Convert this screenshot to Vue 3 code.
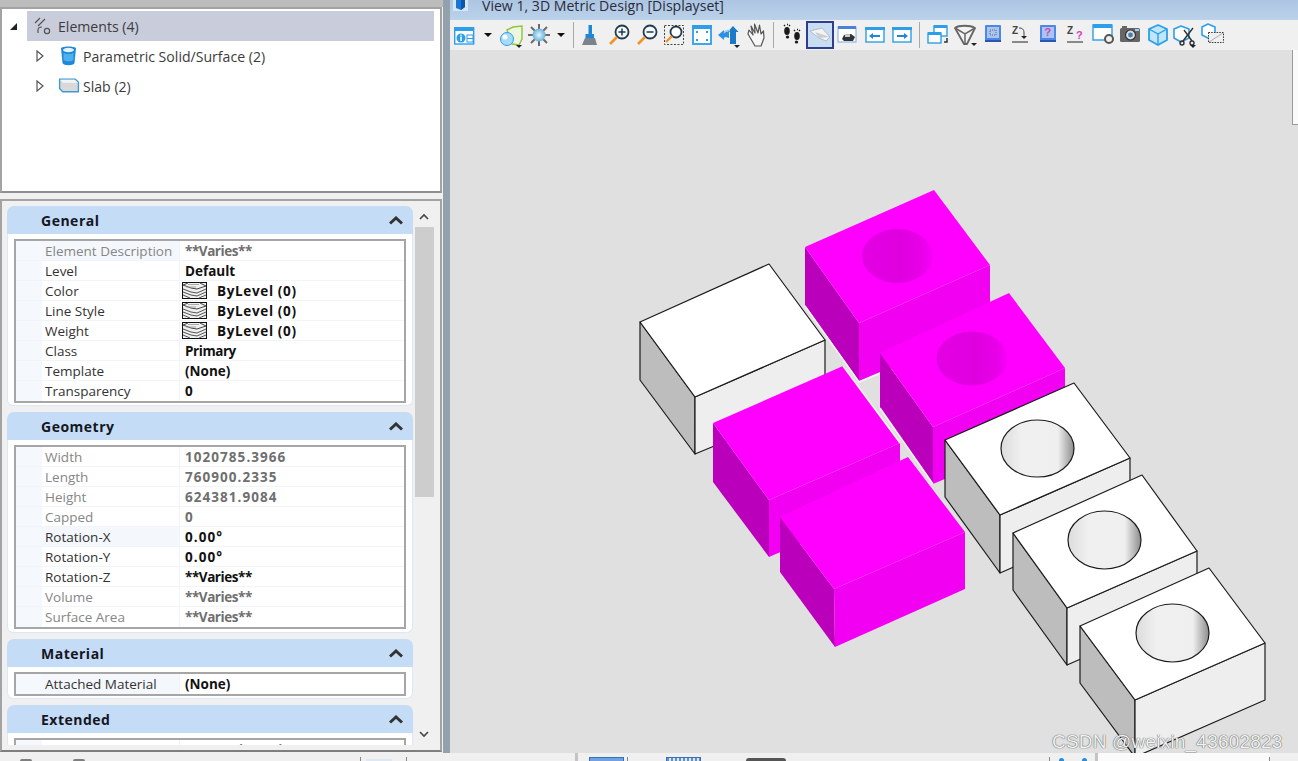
<script setup>
const sections = [
  {
    title: 'General',
    rows: [
      { label: 'Element Description', value: '**Varies**', dim: true, mark: true, fit: 'tight' },
      { label: 'Level', value: 'Default' },
      { label: 'Color', value: 'ByLevel (0)', swatch: true, fit: 'wide' },
      { label: 'Line Style', value: 'ByLevel (0)', swatch: true, fit: 'wide' },
      { label: 'Weight', value: 'ByLevel (0)', swatch: true, fit: 'wide' },
      { label: 'Class', value: 'Primary', fit: 'tight' },
      { label: 'Template', value: '(None)' },
      { label: 'Transparency', value: '0' }
    ]
  },
  {
    title: 'Geometry',
    rows: [
      { label: 'Width', value: '1020785.3966', dim: true, fit: 'num' },
      { label: 'Length', value: '760900.2335', dim: true, fit: 'num' },
      { label: 'Height', value: '624381.9084', dim: true, fit: 'num' },
      { label: 'Capped', value: '0', dim: true },
      { label: 'Rotation-X', value: '0.00°', mark: true, fit: 'num' },
      { label: 'Rotation-Y', value: '0.00°', fit: 'num' },
      { label: 'Rotation-Z', value: '**Varies**', fit: 'tight' },
      { label: 'Volume', value: '**Varies**', dim: true, fit: 'tight' },
      { label: 'Surface Area', value: '**Varies**', dim: true, fit: 'tight' }
    ]
  },
  {
    title: 'Material',
    rows: [{ label: 'Attached Material', value: '(None)', mark: true }]
  },
  {
    title: 'Extended',
    rows: [{ label: 'Model', value: '3D Metric Design', dim: true }]
  }
]

// page coordinates of the blocks in the view
const blocks = [
  {
    kind: 'plain',
    top: '640,322 769,264 825,340 695,397',
    left: '640,322 695,397 695,454 640,380',
    front: '695,397 825,340 825,400 695,454'
  },
  {
    kind: 'pink',
    top: '805,247 934,190 990,265 859,323',
    left: '805,247 859,323 859,381 805,305',
    front: '859,323 990,265 990,325 859,381',
    edge: '805,306 859,382 881,373',
    hole: [897.5, 256, 35.5, 27]
  },
  {
    kind: 'pink',
    top: '713,423 843,366 900,443 769,500',
    left: '713,423 769,500 769,557 713,482',
    front: '769,500 900,443 900,500 769,557',
    edge: '843,366 900,443'
  },
  {
    kind: 'pink',
    top: '880,353 1009,293 1065,368 933,427',
    left: '880,353 933,427 933,484 880,408',
    front: '933,427 1065,368 1065,428 933,484',
    edge: '880,408 933,484',
    hole: [972, 358.5, 35.5, 27]
  },
  {
    kind: 'pink',
    top: '780,517 908,457 965,532 834,589',
    left: '780,517 834,589 835,647 780,572',
    front: '834,589 965,532 965,589 835,647'
  },
  {
    kind: 'plain',
    top: '945,440 1074,383 1130,458 1000,515',
    left: '945,440 1000,515 1000,573 945,497',
    front: '1000,515 1130,458 1130,516 1000,573',
    hole: [1037.5, 448.5, 36.5, 28.5]
  },
  {
    kind: 'plain',
    top: '1013,533 1142,475 1197,551 1067,608',
    left: '1013,533 1067,608 1067,665 1013,590',
    front: '1067,608 1197,551 1197,608 1067,665',
    hole: [1104.5, 540, 36.5, 29]
  },
  {
    kind: 'plain',
    top: '1080,626 1209,568 1265,643 1135,700',
    left: '1080,626 1135,700 1135,757 1080,683',
    front: '1135,700 1265,643 1265,700 1135,757',
    hole: [1172.5, 633, 36.5, 29]
  }
]
</script>

<template>
  <div class="app">
    <div class="main">
      <aside class="left">
        <div class="top-strip"></div>

        <div class="tree">
          <div class="tree-row selected">
            <span class="arrow-open"></span>
            <svg class="tree-icon elements" width="20" height="20" viewBox="0 0 20 20" fill="none" stroke="#555" stroke-width="1.2">
              <path d="M2 7 7 2M5 10l7-7M5 17v-3c0-2 1-3 4-3" />
              <circle cx="14" cy="15" r="2.6" />
            </svg>
            <span>Elements (4)</span>
          </div>
          <div class="tree-row child">
            <svg class="expander" width="8" height="12" viewBox="0 0 8 12"><path d="M1 1l6 5-6 5z" fill="#fff" stroke="#555" stroke-width="1.2" /></svg>
            <svg class="tree-icon" width="22" height="22" viewBox="0 0 22 22">
              <path d="M3 3c3-2 12-2 15 0l-1.500 15c-1 3-11 3-12 0z" fill="#1e88d8" />
              <ellipse cx="10.500" cy="5" rx="5.500" ry="2.200" fill="#e4f2fb" />
              <path d="M5.500 7.500v7c1 2.500 9 2.500 10 0v-7c-2 2-8 2-10 0z" fill="#4eb0ee" />
            </svg>
            <span>Parametric Solid/Surface (2)</span>
          </div>
          <div class="tree-row child">
            <svg class="expander" width="8" height="12" viewBox="0 0 8 12"><path d="M1 1l6 5-6 5z" fill="#fff" stroke="#555" stroke-width="1.2" /></svg>
            <svg class="tree-icon" width="22" height="21" viewBox="0 0 21 20">
              <path d="M1.500 3h15l3 3v9h-15l-3-3z" fill="#d9d9d9" stroke="#3d9ad6" stroke-width="1.3" stroke-linejoin="round" />
              <path d="M2 3.500h14l3 3H5z" fill="#f5f5f5" />
            </svg>
            <span>Slab (2)</span>
          </div>
        </div>

        <div class="props">
          <div class="sections">
            <section v-for="section in sections" :key="section.title" class="section">
              <header class="section-head">
                <h3>{{ section.title }}</h3>
                <svg width="14" height="9" viewBox="0 0 14 9"><path d="M1 7.500 7 2l6 5.500" fill="none" stroke="#333" stroke-width="3" /></svg>
              </header>
              <div class="section-body">
                <div class="grid">
                  <div v-for="row in section.rows" :key="row.label" class="row" :class="{ dim: row.dim }">
                    <div class="label" :class="{ mark: row.mark }">{{ row.label }}</div>
                    <div class="value" :class="row.fit">
                      <svg v-if="row.swatch" class="swatch" width="25" height="17" viewBox="0 0 25 17">
                        <rect x=".5" y=".5" width="24" height="16" fill="#efefef" stroke="#111" />
                        <path d="M1 3l5-2M18 1l6 3-9 3-6-1-8-3" fill="none" stroke="#444" />
                        <path d="M1 7l8 3 6 1 9-4M1 10l8 3 6 1 9-4M1 13l7 3M17 16l7-3" fill="none" stroke="#555" />
                        <path d="M6 2.500h11M4 5h10" stroke="#999" stroke-width=".8" />
                      </svg>
                      <span>{{ row.value }}</span>
                    </div>
                  </div>
                </div>
              </div>
            </section>
          </div>
          <div class="scrollbar">
            <svg class="sb-btn" width="12" height="21" viewBox="0 0 12 21"><path d="M2 13l4-4 4 4" fill="none" stroke="#444" stroke-width="1.6" /></svg>
            <div class="thumb"></div>
            <div class="sb-space"></div>
            <svg class="sb-btn" width="12" height="20" viewBox="0 0 12 20"><path d="M2 7l4 4 4-4" fill="none" stroke="#444" stroke-width="1.6" /></svg>
          </div>
        </div>
      </aside>

      <div class="splitter"></div>

      <div class="right">
        <div class="titlebar">
          <svg width="15" height="11" viewBox="0 0 15 11"><rect width="15" height="11" fill="#d8e6f4" /><path d="M3 0h9v7l-4 3-5-2z" fill="#1877d6" /><path d="M8 0h4v7l-4 3z" fill="#0c55a8" /></svg>
          <span>View 1, 3D Metric Design [Displayset]</span>
        </div>

        <div class="toolbar">
          <span class="btn"><svg width="28" height="28" viewBox="0 0 28 28"><rect x="4.700" y="7" width="19" height="16" fill="#fff" stroke="#2c9eea" stroke-width="1.400" /><rect x="4" y="6" width="20" height="4" fill="#2c9eea" /><circle cx="11" cy="17" r="4.500" fill="#2c9eea" /><rect x="10.300" y="15.500" width="1.500" height="4.500" fill="#fff" /><rect x="10.300" y="13.600" width="1.500" height="1.200" fill="#fff" /><rect x="17" y="14" width="6" height="7" fill="none" stroke="#2c9eea" /><path d="M17 17.500h6" stroke="#2c9eea" /></svg></span>
          <span class="caret-slot wide"><i class="caret"></i></span>
          <span class="btn"><svg width="28" height="28" viewBox="0 0 28 28"><path d="M10 9l6-3 9-1v13l-3 6-7-1z" fill="#eef7de" stroke="#8cc63f" stroke-width="1.400" /><circle cx="10" cy="18" r="6.500" fill="#a6dbfa" stroke="#2c9eea" /><circle cx="8" cy="16" r="2.500" fill="#fff" /><path d="M19 24h6l-3 3z" fill="#222" /></svg></span>
          <span class="btn"><svg width="28" height="28" viewBox="0 0 28 28"><defs><radialGradient id="sun"><stop offset="0" stop-color="#dff6ff" /><stop offset="1" stop-color="#6ab0da" /></radialGradient></defs><path d="M14 3v22M3 14h22M6 6l16 16M22 6 6 22" stroke="#6a6a6a" stroke-width="2" /><circle cx="14" cy="14" r="6.500" fill="url(#sun)" /></svg></span>
          <span class="caret-slot"><i class="caret"></i></span>
          <span class="sep"></span>
          <span class="btn"><svg width="28" height="28" viewBox="0 0 28 28"><path d="M12.500 4h3.500v9h2v4H9.500v-4h3z" fill="#1f86d8" /><path d="M9 17h10l2 7H6z" fill="#7b848c" /></svg></span>
          <span class="btn push"><svg width="28" height="28" viewBox="0 0 28 28"><circle cx="17" cy="11" r="6.500" fill="#f4f8fb" stroke="#1f3b4d" stroke-width="1.800" /><path d="M17 7.500v7M13.500 11h7" stroke="#1f3b4d" stroke-width="1.500" /><path d="M12 16l-7 7" stroke="#f0942a" stroke-width="2.600" /></svg></span>
          <span class="btn"><svg width="28" height="28" viewBox="0 0 28 28"><circle cx="17" cy="11" r="6.500" fill="#f4f8fb" stroke="#1f3b4d" stroke-width="1.800" /><path d="M13.500 11h7" stroke="#1f3b4d" stroke-width="1.500" /><path d="M12 16l-7 7" stroke="#f0942a" stroke-width="2.600" /></svg></span>
          <span class="btn"><svg width="28" height="28" viewBox="0 0 28 28"><rect x="4.500" y="4.500" width="19" height="19" fill="none" stroke="#444" stroke-dasharray="2 1.500" /><circle cx="16" cy="11" r="5.500" fill="#fff" stroke="#1f3b4d" stroke-width="1.800" /><path d="M12 15l-6 6" stroke="#f0942a" stroke-width="2.400" /></svg></span>
          <span class="btn"><svg width="28" height="28" viewBox="0 0 28 28"><rect x="5" y="5" width="18" height="18" fill="#fff" stroke="#2c9eea" stroke-width="1.800" /><rect x="4" y="4" width="20" height="4" fill="#2c9eea" /><path d="M8 10h2v2H8zM18 10h2v2h-2zM8 18h2v2H8zM18 18h2v2h-2z" fill="#2c9eea" /></svg></span>
          <span class="btn"><svg width="28" height="28" viewBox="0 0 28 28"><path d="M3 14l6-5v2.500c2-1 3-1 5-.5v6c-2-1-3-1-5-.5V19z" fill="#2c8fe0" /><path d="M15 23V11h-2.500L18 5l5.500 6H21v12z" fill="#1c78c8" /><path d="M9 12c2-3 4-3 6-2" fill="none" stroke="#8cc8f2" stroke-width="1.500" /><path d="M19 24h6l-3 3z" fill="#222" /></svg></span>
          <span class="btn"><svg width="28" height="28" viewBox="0 0 28 28"><path d="M6 9l4 5-2-9 4 7-.5-9 3.500 9 1.500-8 1.500 9 2.500-3 .5 7-3 8h-6L5 13z" fill="#f7f7f7" stroke="#555" stroke-width="1.200" stroke-linejoin="round" /></svg></span>
          <span class="sep"></span>
          <span class="btn push"><svg width="28" height="28" viewBox="0 0 28 28"><ellipse cx="9" cy="10" rx="2.800" ry="4" fill="#1a1a1a" /><ellipse cx="9.500" cy="16" rx="1.700" ry="1.600" fill="#1a1a1a" /><path d="M6 5l1-1M9 3.500h1M12 5l-1-1" stroke="#1a1a1a" stroke-width="1.400" /><ellipse cx="19" cy="15" rx="2.800" ry="4" fill="#1a1a1a" /><ellipse cx="18.500" cy="21" rx="1.700" ry="1.600" fill="#1a1a1a" /><path d="M16 10l1-1M19 8.500h1M22 10l-1-1" stroke="#1a1a1a" stroke-width="1.400" /></svg></span>
          <span class="btn active"><svg width="28" height="28" viewBox="0 0 28 28"><path d="M4 10l12-3 8 9-4 4-7-3z" fill="#f3f3f3" stroke="#b4bcc4" /><path d="M9 11l15 5-11 1z" fill="#c9ced3" /></svg></span>
          <span class="btn"><svg width="28" height="28" viewBox="0 0 28 28"><rect x="5" y="6" width="18" height="15" fill="#fff" stroke="#7aa9e0" /><rect x="5" y="5" width="18" height="3" fill="#4d7fdc" /><path d="M9 18l2-4 7-1 4 3-2 4H11z" fill="#333" /><path d="M12 14l5-1v3h-5z" fill="#ccc" /></svg></span>
          <span class="btn"><svg width="28" height="28" viewBox="0 0 28 28"><rect x="5" y="8" width="18" height="13" fill="#fff" stroke="#2c9eea" stroke-width="1.400" /><rect x="4" y="6" width="20" height="3" fill="#2c9eea" /><path d="M8 15l4-3v2h7v2h-7v2z" fill="#1f86d8" /></svg></span>
          <span class="btn"><svg width="28" height="28" viewBox="0 0 28 28"><rect x="5" y="8" width="18" height="13" fill="#fff" stroke="#2c9eea" stroke-width="1.400" /><rect x="4" y="6" width="20" height="3" fill="#2c9eea" /><path d="M20 15l-4-3v2H9v2h7v2z" fill="#1f86d8" /></svg></span>
          <span class="sep"></span>
          <span class="btn push"><svg width="28" height="28" viewBox="0 0 28 28"><rect x="10" y="5" width="13" height="10" fill="#fff" stroke="#2c9eea" stroke-width="1.400" /><rect x="10" y="4" width="13" height="3" fill="#2c9eea" /><rect x="4" y="12" width="13" height="10" fill="#fff" stroke="#2c9eea" stroke-width="1.400" /><rect x="4" y="11" width="13" height="3" fill="#2c9eea" /><path d="M20 21h3v-4" fill="none" stroke="#333" stroke-width="1.500" /></svg></span>
          <span class="btn"><svg width="28" height="28" viewBox="0 0 28 28"><path d="M4 7c4-3 15-3 20 0l-8 16h-3z" fill="#f3f3f3" stroke="#666" stroke-width="1.800" stroke-linejoin="round" /><path d="M4 7l10 6 10-6M14 13v10" fill="none" stroke="#666" stroke-width="1.500" /><path d="M20 22h6l-3 3z" fill="#222" /></svg></span>
          <span class="btn"><svg width="28" height="28" viewBox="0 0 28 28"><rect x="6" y="4" width="16" height="17" rx="1" fill="#4f86ea" /><rect x="8" y="6" width="12" height="11" fill="#a9c6ee" /><path d="M11 9h6v5h-6z" fill="none" stroke="#667" stroke-dasharray="1 1" /><rect x="6" y="19" width="16" height="2" fill="#2a55b0" /></svg></span>
          <span class="btn"><svg width="28" height="28" viewBox="0 0 28 28"><text x="6" y="13" class="ico-z">Z</text><path d="M13 7c3 0 5 1 5 5v4" fill="none" stroke="#444" /><path d="M15 15h6l-3 3z" fill="#222" /><path d="M6 21h16" stroke="#444" stroke-width="1.200" /></svg></span>
          <span class="btn"><svg width="28" height="28" viewBox="0 0 28 28"><rect x="6" y="4" width="16" height="17" rx="1" fill="#4f86ea" /><rect x="8" y="6" width="12" height="11" fill="#a9c6ee" /><text x="10.500" y="15" class="ico-q">?</text><rect x="6" y="19" width="16" height="2" fill="#2a55b0" /></svg></span>
          <span class="btn"><svg width="28" height="28" viewBox="0 0 28 28"><text x="6" y="13" class="ico-z">Z</text><text x="15" y="18" class="ico-q">?</text><path d="M6 21h16" stroke="#444" stroke-width="1.200" /></svg></span>
          <span class="btn"><svg width="28" height="28" viewBox="0 0 28 28"><rect x="4" y="4" width="19" height="15" fill="#fff" stroke="#2c9eea" stroke-width="1.400" /><rect x="4" y="3" width="19" height="4" fill="#2c9eea" /><circle cx="20" cy="18" r="4" fill="#f0f0f0" stroke="#555" stroke-width="2" /></svg></span>
          <span class="btn"><svg width="28" height="28" viewBox="0 0 28 28"><rect x="4" y="7" width="20" height="14" rx="1.500" fill="#666" /><rect x="6" y="5" width="5" height="3" fill="#666" /><circle cx="14.500" cy="14" r="5" fill="#ddd" stroke="#333" stroke-width="1.200" /><circle cx="14.500" cy="14" r="2.400" fill="#3a7fb8" /><rect x="19" y="8" width="4" height="2" fill="#9ad0f5" /></svg></span>
          <span class="btn"><svg width="28" height="28" viewBox="0 0 28 28"><path d="M14 4l9 4v11l-9 5-9-5V8z" fill="#bfe6fb" stroke="#2c9eea" stroke-width="1.800" stroke-linejoin="round" /><path d="M5 8l9 5 9-5M14 13v11" fill="none" stroke="#2c9eea" stroke-width="1.400" /></svg></span>
          <span class="btn"><svg width="28" height="28" viewBox="0 0 28 28"><path d="M10 5l8 3v9l-8 4-7-4V8z" fill="#fff" stroke="#2c9eea" stroke-width="1.600" stroke-linejoin="round" /><path d="M22 7 12 20M13 9l8 11" stroke="#333" stroke-width="1.400" /><circle cx="11" cy="22" r="2" fill="none" stroke="#333" stroke-width="1.400" /><circle cx="21" cy="22" r="2" fill="none" stroke="#333" stroke-width="1.400" /><path d="M19 24h6l-3 3z" fill="#222" /></svg></span>
          <span class="btn"><svg width="28" height="28" viewBox="0 0 28 28"><path d="M9 3l7 3v8l-7 3-6-3V6z" fill="#fff" stroke="#2c9eea" stroke-width="1.600" stroke-linejoin="round" /><rect x="9.500" y="11.500" width="15" height="10" fill="#f0f0f0" stroke="#333" stroke-dasharray="1.500 1.200" /><path d="M10 21l14-9" stroke="#999" stroke-width=".8" /></svg></span>
        </div>

        <div class="viewport">
          <svg class="scene" width="848" height="703" viewBox="450 50 848 703">
            <defs>
              <linearGradient id="holePink">
                <stop offset="0" stop-color="#e400e4" />
                <stop offset=".55" stop-color="#df00df" />
                <stop offset=".85" stop-color="#e800e8" />
                <stop offset="1" stop-color="#f800f8" />
              </linearGradient>
              <linearGradient id="holePlain">
                <stop offset="0" stop-color="#dcdcdc" />
                <stop offset=".28" stop-color="#f0f0f0" />
                <stop offset=".78" stop-color="#efefef" />
                <stop offset="1" stop-color="#8c8c8c" />
              </linearGradient>
            </defs>
            <g v-for="(block, i) in blocks" :key="i" :class="block.kind">
              <polygon class="left-face" :points="block.left" />
              <polygon class="front-face" :points="block.front" />
              <polygon class="top-face" :points="block.top" />
              <polyline v-if="block.edge" class="edge" :points="block.edge" />
              <ellipse
                v-if="block.hole"
                class="hole"
                :cx="block.hole[0]"
                :cy="block.hole[1]"
                :rx="block.hole[2]"
                :ry="block.hole[3]"
              />
            </g>
          </svg>
          <div class="floating"></div>
          <div class="watermark">CSDN @weixin_43602823</div>
        </div>
      </div>
    </div>

    <footer class="statusbar">
      <span class="arc" style="margin-left: 20px"></span>
      <span class="arc" style="margin-left: 41px"></span>
      <span class="tick" style="margin-left: 275px"></span>
      <span class="light-box"></span>
      <span class="tick" style="margin-left: 14px"></span>
      <span class="grip" style="margin-left: 168px"></span>
      <span class="blue-box" style="margin-left: 11px"></span>
      <span class="tick" style="margin-left: 3px"></span>
      <span class="blue-box hatch" style="margin-left: 38px"></span>
      <span class="arc big" style="margin-left: 45px"></span>
      <span class="tick" style="margin-left: 263px"></span>
      <span class="dot" style="margin-left: 9px"></span>
      <span class="dot" style="margin-left: 18px"></span>
      <span class="grip" style="margin-left: 8px"></span>
      <span class="status-end">
        <span class="tick" style="margin-left: 171px"></span>
      </span>
    </footer>
  </div>
</template>

<style scoped>
.app {
  width: 1298px;
  height: 761px;
  overflow: hidden;
  display: flex;
  flex-direction: column;
  background: #f0f0f0;
  font-family: "Open Sans", "Noto Sans", sans-serif;
  color: #222;
}

.main {
  display: flex;
  height: 753px;
}

.left {
  width: 443px;
  flex: none;
  display: flex;
  flex-direction: column;
}

.top-strip {
  height: 7px;
  background: #bcbcbc;
}

.tree {
  height: 186px;
  width: 442px;
  box-sizing: border-box;
  border: 2px solid #a3a3a3;
  border-bottom-color: #8f8f8f;
  background: #fff;
  padding: 2px 6px 0 0;
}

.tree-row {
  height: 30px;
  display: flex;
  align-items: center;
  font-size: 14.100px;
  color: #3c3c3c;
}

.tree-row.selected {
  margin-left: 25px;
  background: #c9ccdb;
  position: relative;
}

.arrow-open {
  position: absolute;
  left: -17px;
  top: 12px;
  width: 0;
  height: 0;
  border-left: 7px solid transparent;
  border-bottom: 7px solid #222;
}

.tree-icon {
  flex: none;
}

.tree-icon.elements {
  margin: 0 5px 0 6px;
}

.tree-row.child {
  padding-left: 34px;
}

.expander {
  flex: none;
  margin-right: 15px;
}

.tree-row.child .tree-icon {
  margin-right: 3px;
  margin-left: -1px;
}

.props {
  margin-top: 6px;
  width: 442px;
  height: 553px;
  box-sizing: border-box;
  border: 2px solid #a3a3a3;
  border-bottom-color: #7e7e7e;
  padding: 5px 0 5px 5px;
  display: flex;
  background: #f0f0f0;
}

.sections {
  width: 406px;
  flex: none;
  overflow: hidden;
  display: flex;
  flex-direction: column;
  gap: 6px;
}

.section {
  flex: none;
}

.section-head {
  height: 28px;
  background: #c5dcf7;
  border-radius: 7px 7px 0 0;
  display: flex;
  align-items: center;
  justify-content: space-between;
  padding: 0 10px 0 34px;
}

.section-head h3 {
  margin: 0;
  font-size: 14px;
  font-weight: 700;
  color: #16161e;
  letter-spacing: .5px;
}

.section-body {
  background: #fff;
  border: solid #dbe8f8;
  border-width: 0 1px 1px;
  border-radius: 0 0 6px 6px;
  padding: 5px 6px 2px;
}

.section:nth-child(2) .section-body {
  padding-bottom: 3px;
}

.grid {
  border: 2px solid #a6a6a6;
  background: linear-gradient(90deg, #f5f8fc 26px, #fff 26px);
}

.row {
  height: 20px;
  box-sizing: border-box;
  display: flex;
  border-bottom: 1px solid #f1f5fa;
  font-size: 13.500px;
  line-height: 20px;
}

.row:last-child {
  border-bottom: none;
}

.label {
  width: 138px;
  margin-left: 26px;
  flex: none;
  box-sizing: border-box;
  padding-left: 3px;
  background: #fff;
  border-right: 1px solid #f1f5fa;
  color: #333;
  white-space: nowrap;
}

.label.mark {
  background: #f4f7fb;
}

.value {
  flex: 1;
  display: flex;
  align-items: center;
  padding-left: 5px;
  font-weight: 700;
  color: #111;
  white-space: nowrap;
}

.value.tight {
  letter-spacing: -.45px;
}

.value.wide {
  letter-spacing: .65px;
}

.value.num {
  letter-spacing: 1.050px;
}

.dim .label {
  color: #868686;
}

.dim .value {
  color: #6f6f6f;
}

.swatch {
  margin: 0 10px 0 -3px;
  flex: none;
}

.scrollbar {
  width: 20px;
  margin-left: 1px;
  display: flex;
  flex-direction: column;
  align-items: center;
}

.sb-btn {
  flex: none;
}

.thumb {
  width: 19px;
  height: 270px;
  background: #cdcdcd;
}

.sb-space {
  flex: 1;
}

.splitter {
  width: 7px;
  flex: none;
  background: #93a1ad;
}

.right {
  flex: 1;
  min-width: 0;
  display: flex;
  flex-direction: column;
}

.titlebar {
  height: 20px;
  flex: none;
  display: flex;
  align-items: flex-start;
  gap: 14px;
  padding-left: 3px;
  background: linear-gradient(#acc5e2, #bbd2ea);
  overflow: hidden;
  font-size: 14.100px;
  line-height: 12px;
  color: #2b2b3a;
}

.toolbar {
  height: 30px;
  flex: none;
  display: flex;
  align-items: center;
  background: #f0f0f0;
}

.btn {
  width: 27.500px;
  height: 28px;
  flex: none;
  box-sizing: border-box;
  display: flex;
  align-items: center;
  justify-content: center;
}

.btn svg {
  flex: none;
}

.btn.push {
  margin-left: 2px;
}

.btn.active {
  background: #c9ddf2;
  outline: 2px solid #2d3f8c;
  outline-offset: -2px;
}

.caret-slot {
  width: 17.500px;
  flex: none;
  display: flex;
  justify-content: center;
}

.caret-slot.wide {
  width: 20px;
}

.caret {
  width: 0;
  height: 0;
  border-left: 4px solid transparent;
  border-right: 4px solid transparent;
  border-top: 4px solid #111;
}

.sep {
  width: 1px;
  height: 26px;
  margin: 0 2.500px;
  flex: none;
  background: #a8a8a8;
}

.ico-z {
  font: 700 10px "Liberation Sans", sans-serif;
  fill: #444;
}

.ico-q {
  font: 700 11px "Liberation Sans", sans-serif;
  fill: #d43fc0;
}

.viewport {
  flex: 1;
  position: relative;
  overflow: hidden;
  background: #e0e0e0;
}

.scene {
  display: block;
}

.pink .top-face {
  fill: #ff00ff;
}

.pink .left-face {
  fill: #bb00bb;
}

.pink .front-face {
  fill: #f200f2;
}

.pink .hole {
  fill: url(#holePink);
}

.pink .edge {
  fill: none;
  stroke: #f4f4f4;
  stroke-width: 1.500;
}

.plain polygon,
.plain .hole {
  stroke: #1c1c1c;
  stroke-width: 1.200;
  stroke-linejoin: round;
}

.plain .top-face {
  fill: #fff;
}

.plain .left-face {
  fill: #bdbdbd;
}

.plain .front-face {
  fill: #eeeeee;
}

.plain .hole {
  fill: url(#holePlain);
}

.floating {
  position: absolute;
  top: -50px;
  right: 0;
  width: 5px;
  height: 124px;
  background: #fafafa;
  border: solid #9a9a9a;
  border-width: 0 0 1px 1px;
}

.watermark {
  position: absolute;
  left: 602px;
  top: 680px;
  font: 19px/24px "Liberation Sans", sans-serif;
  letter-spacing: .2px;
  color: #f2f2f2;
  text-shadow: 0 0 1px #555, 0 0 1px #555;
  white-space: nowrap;
}

.statusbar {
  height: 8px;
  flex: none;
  display: flex;
  align-items: flex-end;
  overflow: hidden;
  background: #f0f0f0;
}

.statusbar > span,
.status-end > span {
  flex: none;
}

.arc {
  width: 12px;
  height: 2px;
  border-radius: 6px 6px 0 0;
  background: #7f7f7f;
}

.arc.big {
  width: 40px;
  height: 3px;
  border-radius: 10px 10px 0 0;
  background: #555;
}

.tick {
  width: 1px;
  height: 4px;
  background: #888;
}

.light-box {
  width: 26px;
  height: 2px;
  margin-left: 5px;
  background: #dfe8f2;
}

.grip {
  width: 3px;
  height: 8px;
  background: #c4c4c4;
}

.blue-box {
  width: 35px;
  height: 4px;
  box-sizing: border-box;
  border: 1px solid #3a6fb5;
  border-bottom: none;
  background: #6fa3e0;
}

.blue-box.hatch {
  background: repeating-linear-gradient(90deg, #5f8fd0 0 2px, #dbe7f5 2px 4px);
}

.dot {
  width: 5px;
  height: 3px;
  border-radius: 3px 3px 0 0;
  background: #1e8fe8;
}

.status-end {
  flex: 1;
  height: 8px;
  display: flex;
  align-items: flex-end;
  background: #fbfbfb;
}
</style>

<style>
html,
body {
  margin: 0;
  background: #f0f0f0;
}
</style>
